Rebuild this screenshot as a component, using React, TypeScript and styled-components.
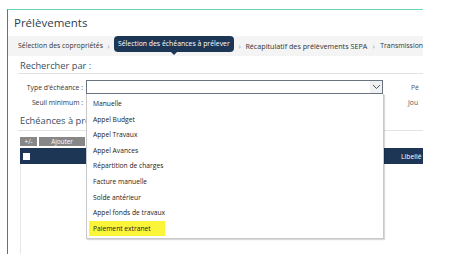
import React from "react";
import styled, { createGlobalStyle } from "styled-components";

const Global = createGlobalStyle`
  html, body { margin: 0; padding: 0; background: #fff; }
  body { font-family: "Open Sans", "Noto Sans", sans-serif; color: #333; }
`;

const Frame = styled.div`
  position: relative;
  margin: 9px 0 0 7px;
  width: 415px;
  height: 244px;
  border-top: 1px solid #6fd6b2;
  border-left: 1px solid #6b6f75;
  background: #fff;
  overflow: hidden;
  display: flex;
  flex-direction: column;
`;

const Title = styled.div`
  height: 26px;
  padding-left: 6px;
  font-size: 11.5px;
  line-height: 25px;
  color: #2d3e50;
`;

const Crumbs = styled.div`
  height: 20px;
  background: #f4f4f4;
  display: flex;
  align-items: flex-start;
  padding-left: 10px;
  font-size: 6.9px;
  white-space: nowrap;
`;

const Crumb = styled.div<{ $active?: boolean }>`
  position: relative;
  height: 16px;
  line-height: 16px;
  padding: 0 ${(p) => (p.$active ? "4px" : "0")};
  border-radius: 4px;
  color: ${(p) => (p.$active ? "#fff" : "#333")};
  background: ${(p) => (p.$active ? "#1d3656" : "transparent")};
  margin-top: ${(p) => (p.$active ? "0" : "2px")};
  ${(p) =>
    p.$active &&
    `&::after{content:"";position:absolute;left:50%;bottom:-3px;margin-left:-3px;border-left:3px solid transparent;border-right:3px solid transparent;border-top:3px solid #1d3656;}`}
`;

const Sep = styled.div<{ $w: number }>`
  width: ${(p) => p.$w}px;
  text-align: center;
  margin-top: 2px;
  line-height: 16px;
  color: #999;
  font-size: 8px;
`;

const Body = styled.div`
  flex: 1;
  padding: 3px 0 0 10px;
  display: flex;
  flex-direction: column;
`;

const Section = styled.div`
  font-size: 9.3px;
  color: #3a4d62;
  padding-left: 2px;
  height: 14px;
  line-height: 14px;
  border-bottom: 1px solid #e3e3e3;
`;

const Form = styled.div`
  display: grid;
  grid-template-columns: 68px 297px 1fr;
  row-gap: 2px;
  margin-top: 6px;
  align-items: center;
  font-size: 6.8px;
  color: #333;
`;

const Label = styled.div`
  text-align: right;
  padding-right: 3px;
  white-space: nowrap;
`;

const SideLabel = styled.div<{ $pad: number }>`
  padding-left: ${(p) => p.$pad}px;
  white-space: nowrap;
  color: #555;
`;

const Select = styled.div`
  position: relative;
  height: 12px;
  border: 1px solid #6a7380;
  background: #fff;
  display: flex;
  justify-content: flex-end;
  align-items: center;
`;

const Chevron = styled.div`
  width: 12px;
  height: 12px;
  background: #eef0f2;
  display: flex;
  align-items: center;
  justify-content: center;
`;

const Blank = styled.div`
  height: 12px;
`;

const Heading = styled(Section)`
  margin-top: 6px;
  height: 16px;
  line-height: 14px;
`;

const Buttons = styled.div`
  display: flex;
  gap: 2px;
  margin-top: 6px;
  padding-left: 2px;
`;

const Btn = styled.div<{ $w: number }>`
  width: ${(p) => p.$w}px;
  height: 9px;
  background: #878787;
  color: #fff;
  font-size: 6.3px;
  line-height: 9px;
  text-align: center;
`;

const TableHead = styled.div`
  margin-top: 2px;
  margin-left: 2px;
  height: 16px;
  background: #1d3656;
  display: flex;
  align-items: center;
  justify-content: space-between;
  padding: 0 0 0 3px;
`;

const Check = styled.div`
  width: 7px;
  height: 7px;
  background: #fff;
`;

const HeadText = styled.div`
  color: #fff;
  font-size: 6.8px;
  width: 22px;
  overflow: hidden;
  white-space: nowrap;
`;

const TableBody = styled.div`
  flex: 1;
  margin-left: 2px;
  border-left: 1px solid #e6e6e6;
`;

const Dropdown = styled.div`
  position: absolute;
  left: 78px;
  top: 84px;
  width: 296px;
  height: 142px;
  background: #fff;
  border: 1px solid #c8c8c8;
  border-top: none;
  box-shadow: 1px 1px 1px rgba(0, 0, 0, 0.15);
  padding-top: 2px;
  display: flex;
  flex-direction: column;
`;

const Option = styled.div<{ $hl?: boolean }>`
  height: 15.6px;
  line-height: 15.6px;
  font-size: 6.7px;
  padding-left: 4px;
  margin-left: 2px;
  width: ${(p) => (p.$hl ? "72px" : "auto")};
  background: ${(p) => (p.$hl ? "#fbf53a" : "transparent")};
  color: #222;
  white-space: nowrap;
`;

const options = [
  "Manuelle",
  "Appel Budget",
  "Appel Travaux",
  "Appel Avances",
  "Répartition de charges",
  "Facture manuelle",
  "Solde antérieur",
  "Appel fonds de travaux",
];

export default function App() {
  return (
    <>
      <Global />
      <Frame>
        <Title>Prélèvements</Title>
        <Crumbs>
          <Crumb>Sélection des copropriétés</Crumb>
          <Sep $w={16}>›</Sep>
          <Crumb $active>Sélection des échéances à prélever</Crumb>
          <Sep $w={17}>›</Sep>
          <Crumb style={{ fontSize: "7.2px" }}>Récapitulatif des prélèvements SEPA</Crumb>
          <Sep $w={19}>›</Sep>
          <Crumb>Transmission</Crumb>
        </Crumbs>
        <Body>
          <Section>Rechercher par :</Section>
          <Form>
            <Label>Type d'échéance :</Label>
            <Select>
              <Chevron>
                <svg width="9" height="6" viewBox="0 0 9 6">
                  <path d="M1 1 L4.5 4.5 L8 1" fill="none" stroke="#555" strokeWidth="1" />
                </svg>
              </Chevron>
            </Select>
            <SideLabel $pad={28}>Pé</SideLabel>
            <Label>Seuil minimum :</Label>
            <Blank />
            <SideLabel $pad={25}>Jou</SideLabel>
          </Form>
          <Heading>Echéances à prélever</Heading>
          <Buttons>
            <Btn $w={17}>+/-</Btn>
            <Btn $w={46}>Ajouter</Btn>
          </Buttons>
          <TableHead>
            <Check />
            <HeadText>Libellé</HeadText>
          </TableHead>
          <TableBody />
        </Body>
        <Dropdown>
          {options.map((o) => (
            <Option key={o}>{o}</Option>
          ))}
          <Option $hl>Paiement extranet</Option>
        </Dropdown>
      </Frame>
    </>
  );
}
